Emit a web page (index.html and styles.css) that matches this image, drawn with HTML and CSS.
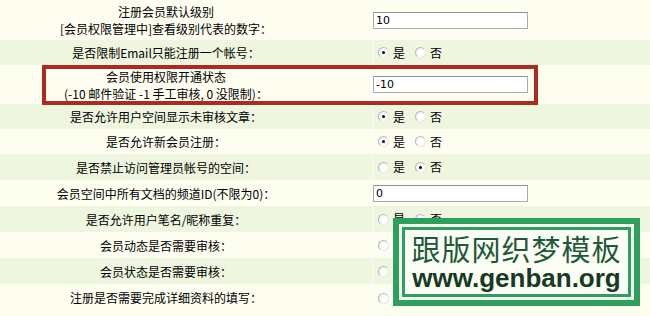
FILE: index.html
```html
<!DOCTYPE html>
<html>
<head>
<meta charset="utf-8">
<link rel="stylesheet" href="styles.css">
</head>
<body>
<div class="page">
  <div class="row cream h40">
    <div class="label">注册会员默认级别<br>[会员权限管理中]查看级别代表的数字：</div>
    <div class="value"><span class="field">10</span></div>
  </div>
  <div class="row green h25">
    <div class="label">是否限制Email只能注册一个帐号：</div>
    <div class="value"><span class="radios"><span class="radio on"></span><span class="opt">是</span><span class="radio"></span><span class="opt">否</span></span></div>
  </div>
  <div class="row cream h39">
    <div class="label">会员使用权限开通状态<br>(-10 邮件验证 -1 手工审核, 0 没限制)：</div>
    <div class="value"><span class="field">-10</span></div>
  </div>
  <div class="row green h25">
    <div class="label">是否允许用户空间显示未审核文章：</div>
    <div class="value"><span class="radios"><span class="radio on"></span><span class="opt">是</span><span class="radio"></span><span class="opt">否</span></span></div>
  </div>
  <div class="row cream h25">
    <div class="label">是否允许新会员注册：</div>
    <div class="value"><span class="radios"><span class="radio on"></span><span class="opt">是</span><span class="radio"></span><span class="opt">否</span></span></div>
  </div>
  <div class="row green h26">
    <div class="label">是否禁止访问管理员帐号的空间：</div>
    <div class="value"><span class="radios"><span class="radio"></span><span class="opt">是</span><span class="radio on"></span><span class="opt">否</span></span></div>
  </div>
  <div class="row cream h26">
    <div class="label">会员空间中所有文档的频道ID(不限为0)：</div>
    <div class="value"><span class="field">0</span></div>
  </div>
  <div class="row green h26">
    <div class="label">是否允许用户笔名/昵称重复：</div>
    <div class="value"><span class="radios"><span class="radio"></span><span class="opt">是</span><span class="radio on"></span><span class="opt">否</span></span></div>
  </div>
  <div class="row cream h26">
    <div class="label">会员动态是否需要审核：</div>
    <div class="value"><span class="radios"><span class="radio"></span><span class="opt">是</span><span class="radio on"></span><span class="opt">否</span></span></div>
  </div>
  <div class="row green h26">
    <div class="label">会员状态是否需要审核：</div>
    <div class="value"><span class="radios"><span class="radio"></span><span class="opt">是</span><span class="radio on"></span><span class="opt">否</span></span></div>
  </div>
  <div class="row cream h32">
    <div class="label">注册是否需要完成详细资料的填写：</div>
    <div class="value"><span class="radios"><span class="radio"></span><span class="opt">是</span><span class="radio on"></span><span class="opt">否</span></span></div>
  </div>

  <div class="mark"></div>

  <div class="stamp">
    <div class="stamp-inner">
      <div class="stamp-cn">跟版网织梦模板</div>
      <div class="stamp-url">www.genban.org</div>
    </div>
  </div>
</div>
</body>
</html>
```

FILE: styles.css
```css
html, body {
  margin: 0;
  padding: 0;
  background: #fdfdf1;
}
.page {
  position: relative;
  width: 650px;
  height: 316px;
  overflow: hidden;
  font-family: "Noto Sans CJK SC", "DejaVu Sans", sans-serif;
  font-size: 12px;
  color: #000;
}
.row {
  display: flex;
  align-items: center;
}
.cream { background: #fdfdf0; }
.green { background: #eef6df; }
.h25 { height: 25px; }
.h26 { height: 26px; }
.h32 { height: 32px; align-items: flex-start; padding-top: 0; }
.h39 { height: 39px; }
.h40 { height: 40px; }
.label {
  width: 332px;
  margin-right: 40px;
  text-align: center;
  line-height: 17px;
}
.h32 .label { padding-top: 5px; }
.value {
  flex: 1;
  align-self: stretch;
  display: flex;
  align-items: center;
  border-left: 1px solid rgba(255,255,255,0.7);
}
.h32 .value { align-items: flex-start; padding-top: 7px; }
.field {
  display: block;
  box-sizing: border-box;
  width: 155px;
  height: 17px;
  margin-left: 0;
  border: 1px solid #a5acb2;
  border-top-color: #8c9197;
  background: #fff;
  font-family: "DejaVu Sans", sans-serif;
  font-size: 11px;
  line-height: 15px;
  padding-left: 2px;
}
.radios {
  display: flex;
  align-items: center;
  margin-left: 5px;
}
.radio {
  position: relative;
  box-sizing: border-box;
  width: 11px;
  height: 11px;
  border-radius: 50%;
  border: 1px solid #b8b8b8;
  border-right-color: #e6e6e6;
  border-bottom-color: #e6e6e6;
  background: radial-gradient(circle at 65% 65%, #ffffff 40%, #ececec 100%);
}
.radio.on::after {
  content: "";
  position: absolute;
  left: 3px;
  top: 3px;
  width: 3px;
  height: 3px;
  border-radius: 50%;
  background: #000;
}
.opt {
  margin-left: 4px;
  margin-right: 10px;
  line-height: 14px;
}

.mark {
  position: absolute;
  left: 42px;
  top: 65px;
  width: 496px;
  height: 40px;
  box-sizing: border-box;
  border: 4px solid #ad2a20;
}

.stamp {
  position: absolute;
  left: 393px;
  top: 218px;
  width: 247px;
  height: 88px;
  box-sizing: border-box;
  border: 6px solid #2e9f5c;
  background: #f3faf0;
  padding: 3px;
}
.stamp-inner {
  box-sizing: border-box;
  height: 100%;
  border: 3px solid #2e9f5c;
  background: #fcfdf4;
  display: flex;
  flex-direction: column;
  align-items: center;
  justify-content: center;
}
.stamp-cn {
  font-family: "Noto Sans CJK SC", sans-serif;
  font-size: 29px;
  line-height: 32px;
  color: #1d5a37;
  letter-spacing: 1px;
}
.stamp-url {
  font-family: "Liberation Sans", Arial, sans-serif;
  font-weight: bold;
  font-size: 26px;
  line-height: 28px;
  color: #163a23;
}
```
